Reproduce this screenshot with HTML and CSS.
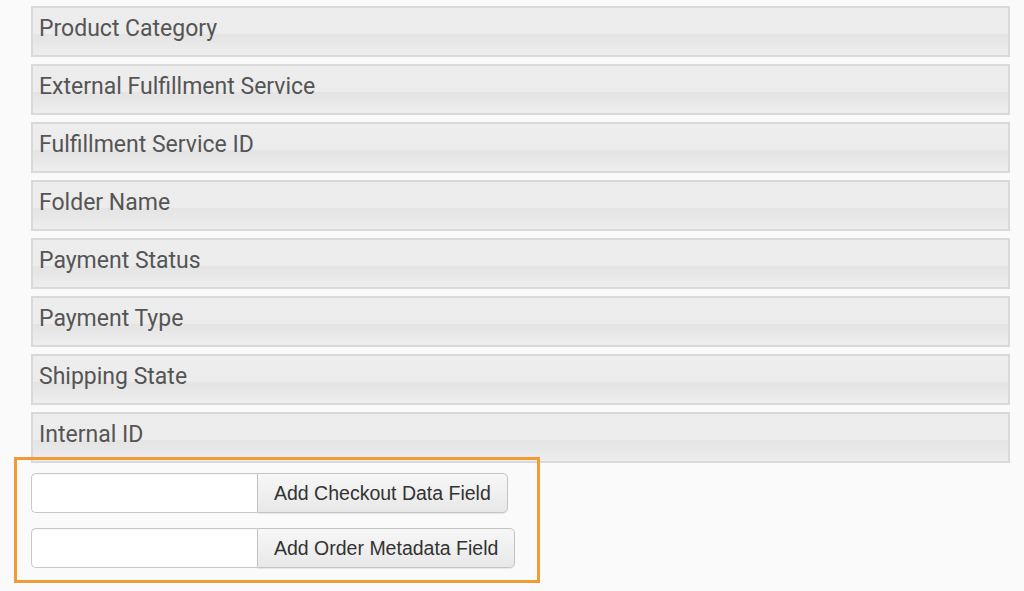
FILE: index.html
```html
<!DOCTYPE html>
<html>
<head>
<meta charset="utf-8">
<link rel="stylesheet" href="styles.css">
</head>
<body>
<div class="page">
  <div class="fields">
    <div class="field">Product Category</div>
    <div class="field">External Fulfillment Service</div>
    <div class="field">Fulfillment Service ID</div>
    <div class="field">Folder Name</div>
    <div class="field">Payment Status</div>
    <div class="field">Payment Type</div>
    <div class="field">Shipping State</div>
    <div class="field">Internal ID</div>
  </div>
  <div class="adders">
    <div class="adder">
      <input class="adder-input" type="text">
      <button class="adder-btn">Add Checkout Data Field</button>
    </div>
    <div class="adder">
      <input class="adder-input" type="text">
      <button class="adder-btn">Add Order Metadata Field</button>
    </div>
    <div class="highlight"></div>
  </div>
</div>
</body>
</html>
```

FILE: styles.css
```css
html, body {
  margin: 0;
  padding: 0;
  background: #fafafa;
}
body {
  min-height: 591px;
}
.page {
  padding: 6px 0 24px 31px;
  width: 979px;
  font-family: Roboto, "Liberation Sans", sans-serif;
}
.fields {
  display: flex;
  flex-direction: column;
  gap: 7px;
}
.field {
  box-sizing: border-box;
  height: 51px;
  border: 2px solid #d9d9d9;
  background: linear-gradient(to bottom, #ededed 0%, #ececec 55%, #e4e4e4 56%, #e9e9e9 80%, #eeeeee 100%);
  color: #555;
  font-size: 23px;
  padding: 7px 0 0 6px;
  line-height: 28px;
}
.adders {
  position: relative;
  display: flex;
  flex-direction: column;
  gap: 15px;
  margin-top: 10px;
}
.adder {
  display: flex;
  height: 40px;
}
.adder-input {
  box-sizing: border-box;
  width: 226px;
  height: 40px;
  margin: 0;
  border: 1px solid #c8c8c8;
  border-right: none;
  border-radius: 5px 0 0 5px;
  background: #fff;
  box-shadow: inset 0 1px 1px rgba(0,0,0,0.04);
}
.adder-btn {
  box-sizing: border-box;
  height: 40px;
  margin: 0;
  padding: 0 16px;
  border: 1px solid #c4c4c4;
  border-radius: 0 5px 5px 0;
  background: linear-gradient(to bottom, #f7f7f7, #e8e8e8);
  box-shadow: 0 1px 1px rgba(0,0,0,0.08);
  font-family: "Liberation Sans", Arial, sans-serif;
  font-size: 19.5px;
  color: #333;
}
.highlight {
  position: absolute;
  left: -17px;
  top: -16px;
  width: 520px;
  height: 120px;
  border: 3px solid #f39a36;
  pointer-events: none;
}
```
